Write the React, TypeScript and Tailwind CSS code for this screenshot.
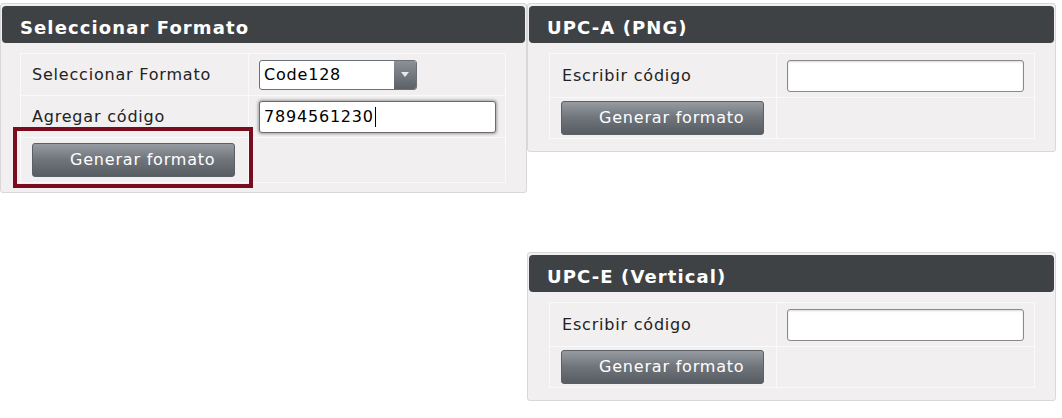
import React from "react";

const font = { fontFamily: '"DejaVu Sans", Verdana, sans-serif' };

function GenerateButton() {
	return (
		<button className="h-[34px] w-[203px] rounded-[3px] border border-[#5b6067] bg-gradient-to-b from-[#979ca3] via-[#6f747b] to-[#585d64] pl-[37px] pr-[10px] text-left text-[16px] leading-none tracking-[0.8px] text-white">
			Generar formato
		</button>
	);
}

function TextInput({ value, focused }: { value?: string; focused?: boolean }) {
	return (
		<div
			className={`flex h-[32px] w-[237px] items-center rounded-[3px] border bg-white pl-[4px] text-[16px] text-black ${
				focused
					? "border-[#6d6d6d] shadow-[0_0_3px_1px_rgba(0,0,0,0.35)]"
					: "border-[#8a8a8a] shadow-[inset_0_1px_2px_rgba(0,0,0,0.15)]"
			}`}>
			{value}
			{focused && <span className="ml-[1px] h-[20px] w-px bg-black" />}
		</div>
	);
}

function Panel({
	title,
	children,
	className = "",
}: {
	title: string;
	children: React.ReactNode;
	className?: string;
}) {
	return (
		<div
			className={`rounded-[3px] border border-[#d9d7d7] bg-[#f1efef] px-[1px] pt-[2px] ${className}`}>
			<div className="flex h-[37px] items-center rounded-[4px] bg-[#3f4245] pl-[18px] pt-[6px] text-[18px] font-bold tracking-[1.1px] text-white">
				{title}
			</div>
			{children}
		</div>
	);
}

function Cell({
	children,
	className = "",
}: {
	children?: React.ReactNode;
	className?: string;
}) {
	return (
		<td className={`border border-[#fbfafa] align-middle ${className}`}>
			{children}
		</td>
	);
}

function CodePanel({ title, className = "" }: { title: string; className?: string }) {
	return (
		<Panel title={title} className={className}>
			<table className="mb-[12px] ml-[20px] mt-[10px] w-[486px] border-collapse text-[16px] tracking-[0.8px] text-[#222]">
				<tbody>
					<tr className="h-[44px]">
						<Cell className="w-[227px] pl-[12px]">Escribir código</Cell>
						<Cell className="pl-[10px]">
							<TextInput />
						</Cell>
					</tr>
					<tr className="h-[41px]">
						<Cell className="pl-[11px]">
							<GenerateButton />
						</Cell>
						<Cell />
					</tr>
				</tbody>
			</table>
		</Panel>
	);
}

export default function App() {
	return (
		<div className="flex h-[418px] w-[1062px] items-start bg-white" style={font}>
			<div className="relative mt-[3px] w-[527px]">
				<Panel title="Seleccionar Formato">
					<table className="mb-[9px] ml-[18px] mt-[10px] w-[486px] border-collapse text-[16px] tracking-[0.8px] text-[#222]">
						<tbody>
							<tr className="h-[42px]">
								<Cell className="w-[228px] pl-[11px]">Seleccionar Formato</Cell>
								<Cell className="pl-[10px]">
									<div className="flex h-[30px] w-[158px] overflow-hidden rounded-[3px] border border-[#6c7077] bg-white">
										<div className="flex flex-1 items-center pl-[4px] text-black">
											Code128
										</div>
										<div className="flex w-[22px] items-center justify-center bg-gradient-to-b from-[#8c9198] to-[#5c6168]">
											<svg width="8" height="5" viewBox="0 0 8 5">
												<path d="M0 0h8L4 5z" fill="#e8e8e8" />
											</svg>
										</div>
									</div>
								</Cell>
							</tr>
							<tr className="h-[42px]">
								<Cell className="pl-[11px]">Agregar código</Cell>
								<Cell className="pl-[10px]">
									<TextInput value="7894561230" focused />
								</Cell>
							</tr>
							<tr className="h-[45px]">
								<Cell className="pl-[11px]">
									<GenerateButton />
								</Cell>
								<Cell />
							</tr>
						</tbody>
					</table>
				</Panel>
				<div className="pointer-events-none absolute left-[13px] top-[124px] h-[61px] w-[240px] border-4 border-[#7a0c1f]" />
			</div>
			<div className="w-[529px]">
				<CodePanel title="UPC-A (PNG)" className="mt-[3px]" />
				<CodePanel title="UPC-E (Vertical)" className="mt-[100px]" />
			</div>
		</div>
	);
}
